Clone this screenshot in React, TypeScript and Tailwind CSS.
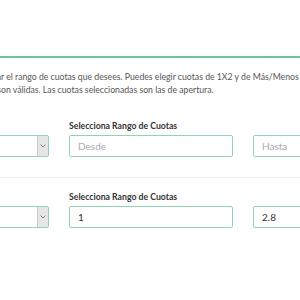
const inputCls =
  'h-[22px] w-full rounded-[2px] border border-[#8fd5b1] bg-white px-2 text-[10px] text-[#333] placeholder:text-[#aaa] outline-none';

const SelectBox = () => (
  <div className="flex h-[22px] w-full overflow-hidden rounded-[2px] border border-[#8fd5b1] bg-white">
    <div className="flex-1" />
    <div className="flex w-[11px] items-center justify-center border-l border-[#ccc] bg-[#e6e6e6]">
      <svg width="6" height="4" viewBox="0 0 6 4" fill="none">
        <path d="M0.5 0.5 L3 3 L5.5 0.5" stroke="#777" strokeWidth="0.9" />
      </svg>
    </div>
  </div>
);

// the text starts left of the window; the hidden head of each line hangs off the left edge
const Line = ({ head, tail }: { head: string; tail: string }) => (
  <div className="flex whitespace-nowrap">
    <div className="flex w-0 justify-end">
      <span>{head}</span>
    </div>
    <span>{tail}</span>
  </div>
);

const Row = ({ from, to }: { from?: string; to?: string }) => (
  <div className="grid grid-cols-[164px_164px_164px] gap-x-5">
    <div />
    <div className="text-[8.7px] font-bold leading-[12px] text-[#333]">Selecciona Rango de Cuotas</div>
    <div />
    <div className="mt-[3px]">
      <SelectBox />
    </div>
    <input className={`mt-[3px] ${inputCls}`} placeholder="Desde" defaultValue={from} />
    <input className={`mt-[3px] ${inputCls}`} placeholder="Hasta" defaultValue={to} />
  </div>
);

export default function App() {
  return (
    <div className="h-[300px] w-[300px] overflow-hidden bg-white font-['Lato','Liberation_Sans',sans-serif]">
      <div className="h-[56px]" />
      <div className="h-[2px] bg-[#6cc49a]" />
      <div className="mt-[12px] pl-[1px] text-[8.7px] leading-[13px] text-[#555]">
        <Line head="Aquí puedes selecciona" tail="r el rango de cuotas que desees. Puedes elegir cuotas de 1X2 y de Más/Menos" />
        <Line head="Todas las ligas s" tail="on válidas. Las cuotas seleccionadas son las de apertura." />
      </div>
      <div className="ml-[-115px] w-[532px]">
        <div className="mt-[24px]">
          <Row />
        </div>
        <div className="mt-[20px] h-px bg-[#ececec]" />
        <div className="mt-[13px]">
          <Row from="1" to="2.8" />
        </div>
      </div>
    </div>
  );
}
